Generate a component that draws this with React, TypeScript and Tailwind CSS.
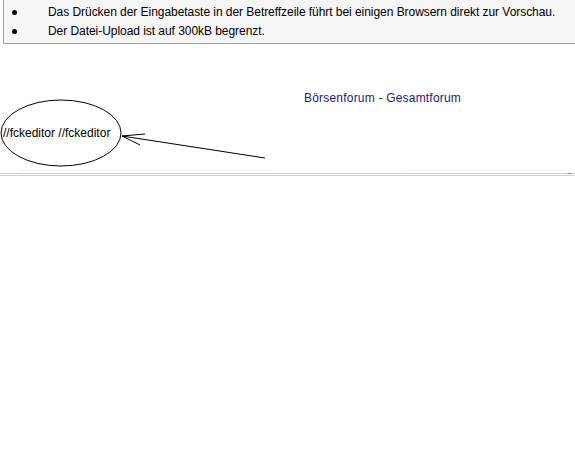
const hints = [
  "Das Drücken der Eingabetaste in der Betreffzeile führt bei einigen Browsern direkt zur Vorschau.",
  "Der Datei-Upload ist auf 300kB begrenzt.",
];

export default function App() {
  return (
    <div className="w-[575px] h-[470px] bg-white overflow-hidden font-['Liberation_Sans',Arial,sans-serif] text-[12px] text-black">
      <div className="ml-[3px] bg-[#f5f5f5] border-l border-b border-[#a0a0a0] pt-[3px] pb-[2px]">
        {hints.map((hint) => (
          <div key={hint} className="flex items-center h-[19px]">
            <span className="ml-[8px] w-[5px] h-[5px] rounded-full bg-black" />
            <span className="ml-[31px] leading-[19px] tracking-[-0.05px]">{hint}</span>
          </div>
        ))}
      </div>

      <div className="flex items-start mt-[47px] h-[79px]">
        <svg width="270" height="72" viewBox="0 0 270 72" className="mt-[8px] shrink-0">
          <ellipse cx="61" cy="34" rx="60" ry="33" fill="none" stroke="#000" strokeWidth="1" />
          <text x="3" y="38" fontFamily="'Liberation Sans', Arial, sans-serif" fontSize="12" fill="#000">
            //fckeditor //fckeditor
          </text>
          <line x1="265" y1="59" x2="122" y2="37" stroke="#000" strokeWidth="1" />
          <line x1="122" y1="37" x2="145" y2="35" stroke="#000" strokeWidth="1" />
          <line x1="122" y1="37" x2="140" y2="46" stroke="#000" strokeWidth="1" />
        </svg>
        <a href="#" className="ml-[34px] text-[#1a1a8c] leading-[14px] tracking-[0.2px]">
          Börsenforum - Gesamtforum
        </a>
      </div>

      <div className="flex h-[1px]">
        <div className="ml-[20px] w-[250px] bg-[#f0f0f6]" />
        <div className="ml-[135px] w-[165px] bg-[#f0f0f6]" />
      </div>
      <div className="relative h-[2px]">
        <span className="absolute right-[3px] -top-[4px] text-[#1a1a8c] text-[9px] leading-none">..</span>
      </div>
      <div className="h-[1px] bg-[#d4d0c8]" />
      <div className="h-[1px]" />
      <div className="h-[1px] bg-[#d4d0c8]" />
    </div>
  );
}
